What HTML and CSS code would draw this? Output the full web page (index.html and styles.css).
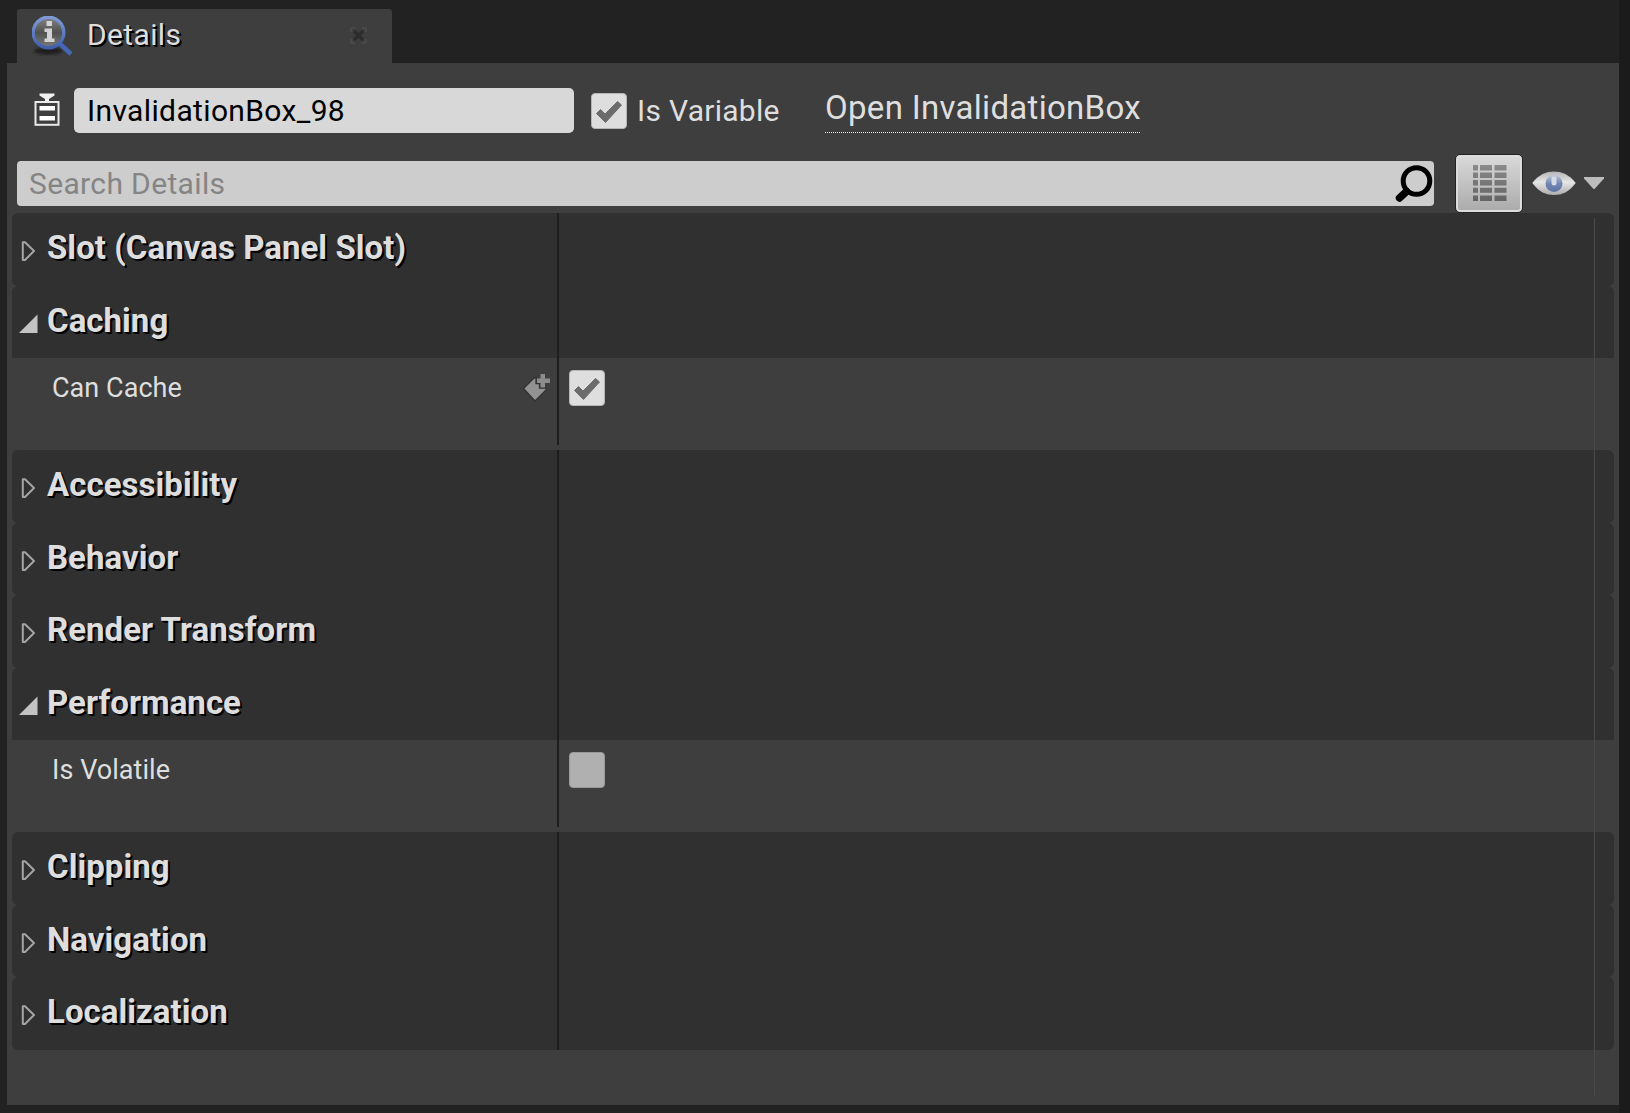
FILE: index.html
```
<!DOCTYPE html>
<html lang="en">
<head>
<meta charset="utf-8">
<title>Details</title>
<link rel="stylesheet" href="styles.css">
</head>
<body>
<svg width="0" height="0" class="defs">
  <defs>
    <linearGradient id="lens" x1="0" y1="0" x2="0" y2="1"><stop offset="0" stop-color="#858585"/><stop offset=".5" stop-color="#505050"/><stop offset="1" stop-color="#7a7a7a"/></linearGradient>
    <linearGradient id="rim" x1="0" y1="0" x2="0" y2="1"><stop offset="0" stop-color="#7f9ad6"/><stop offset="1" stop-color="#3f5fae"/></linearGradient>
    <linearGradient id="eyeball" x1="0" y1="0" x2="0" y2="1"><stop offset="0" stop-color="#b4b4b4"/><stop offset=".45" stop-color="#e6e6e6"/><stop offset="1" stop-color="#adadad"/></linearGradient>
    <linearGradient id="iris" x1="0" y1="0" x2="0" y2="1"><stop offset="0" stop-color="#bcc6da"/><stop offset=".5" stop-color="#7287b4"/><stop offset="1" stop-color="#5f74a3"/></linearGradient>
    <linearGradient id="cells" x1="0" y1="0" x2="0" y2="1"><stop offset="0" stop-color="#8b8b8b"/><stop offset="1" stop-color="#636363"/></linearGradient>
    <filter id="soft" x="-20%" y="-50%" width="140%" height="200%"><feGaussianBlur stdDeviation="1.5"/></filter>
    <symbol id="closed" viewBox="0 0 20 24"><path d="M4.800 3.200v17.800h2.200L16 12 7 3.200z" fill="none" stroke="#a4a4a4" stroke-width="2" stroke-linejoin="round"/></symbol>
    <symbol id="opened" viewBox="0 0 20 24"><path d="M19.500 2.500V21H1z" fill="#c3c3c3"/></symbol>
    <symbol id="tick" viewBox="0 0 36 36"><path d="M5.500 20.500l4-4 4.500 4.500L26.500 8.500l4 3.500L14.500 29.500z" fill="#6c6c6c" stroke="#6c6c6c" stroke-width="1" stroke-linejoin="round"/></symbol>
  </defs>
</svg>

<header class="tabs">
  <div class="tab">
    <svg class="tab-icon" viewBox="0 0 40 40">
      <ellipse cx="16" cy="35" rx="14" ry="3.500" fill="#1c1c1c" filter="url(#soft)"/>
      <path d="M27 27l12 11" stroke="#4566b5" stroke-width="4.500"/>
      <circle cx="16.500" cy="16.500" r="15.300" fill="url(#lens)" stroke="url(#rim)" stroke-width="3.400"/>
      <path d="M14.500 5h5.500v5h-5.500zM12.500 12.500h7.500v10h2.500v3.500H12.500v-3.500h2.500v-6.500h-2.500z" fill="#d2d2d2"/>
    </svg>
    <span class="tab-name">Details</span>
    <svg class="tab-close" viewBox="0 0 17 17">
      <path d="M1 5V1h4M12 1h4v4M16 12v4h-4M5 16H1v-4" fill="none" stroke="#555" stroke-width="1"/>
      <path d="M4 4l9 9M13 4l-9 9" stroke="#2c2c2c" stroke-width="3.200"/>
    </svg>
  </div>
</header>

<main class="panel">
  <div class="object">
    <svg class="widget-icon" viewBox="0 0 26 33">
      <path d="M5.500 .5h15v2l-5.500 3.500v2.500h-4V6L5.500 2.500z" fill="#f0f0f0"/>
      <rect x="1.500" y="9" width="23" height="22.800" fill="none" stroke="#eaeaea" stroke-width="2"/>
      <path d="M5.500 13h15.500v4.500H5.500zM5.500 23h15.500v4.500H5.500z" fill="#fff"/>
    </svg>
    <div class="name-box"><span class="name-text">InvalidationBox_98</span></div>
    <span class="check"><svg viewBox="0 0 36 36"><use href="#tick"/></svg></span>
    <span class="var-label">Is Variable</span>
    <a class="open-link"><span>Open InvalidationBox</span></a>
  </div>

  <div class="filter">
    <div class="search">
      <span class="search-text">Search Details</span>
      <svg class="search-icon" viewBox="0 0 40 40"><circle cx="23.500" cy="17" r="13.300" fill="none" stroke="#000" stroke-width="5"/><path d="M13.500 27.500L6.500 34" stroke="#000" stroke-width="7.500" stroke-linecap="round"/></svg>
    </div>
    <div class="matrix">
      <svg viewBox="0 0 34 37"><path d="M0 0h5v5.500H0zM7 0h12v5.500H7zM21.500 0h12v5.500h-12zM0 7.500h5V13H0zM7 7.500h12V13H7zM21.500 7.500h12V13h-12zM0 15h5v5.500H0zM7 15h12v5.500H7zM21.500 15h12v5.500h-12zM0 22.800h5v5H0zM7 22.800h12v5H7zM21.500 22.800h12v5h-12zM0 30.500h5V36H0zM7 30.500h12V36H7zM21.500 30.500h12V36h-12z" fill="url(#cells)"/></svg>
    </div>
    <svg class="eye" viewBox="0 0 44 26"><path d="M.3 13C7 4.500 14 1.500 22 1.500s15 3 21.700 11.500C37 22 30 25 22 25S7 22 .3 13z" fill="url(#eyeball)"/><circle cx="22" cy="13.500" r="8.500" fill="url(#iris)"/><path d="M19.500 6.500h5V13a2.500 2.500 0 0 1-5 0z" fill="#d5dbe6"/></svg>
    <svg class="arrow" viewBox="0 0 20 12"><path d="M0 0h20v1.500L10.500 12h-1L0 1.500z" fill="#bcbcbc"/></svg>
  </div>

  <div class="list">
    <section class="group tall"><div class="left"><svg class="twist"><use href="#closed"/></svg><span>Slot (Canvas Panel Slot)</span></div></section>
    <section class="group open"><div class="left"><svg class="twist"><use href="#opened"/></svg><span>Caching</span></div></section>
    <div class="prop">
      <div class="left"><span class="prop-name">Can Cache</span>
        <svg class="tag" viewBox="0 0 30 30"><path d="M1.500 14.500L10.500 5.500 14 3v6.500h3.500v4.500H24v2L13 27z" fill="#929292" stroke="#323232" stroke-width="1.300"/><path d="M18.500 0h4.500v4.500h5V9h-5v4.500h-4.500V9H15V4.500h3.500z" fill="#8c8c8c"/></svg>
      </div>
      <div class="value"><span class="check"><svg viewBox="0 0 36 36"><use href="#tick"/></svg></span></div>
    </div>
    <section class="group tall"><div class="left"><svg class="twist"><use href="#closed"/></svg><span>Accessibility</span></div></section>
    <section class="group"><div class="left"><svg class="twist"><use href="#closed"/></svg><span>Behavior</span></div></section>
    <section class="group tall"><div class="left"><svg class="twist"><use href="#closed"/></svg><span>Render Transform</span></div></section>
    <section class="group open"><div class="left"><svg class="twist"><use href="#opened"/></svg><span>Performance</span></div></section>
    <div class="prop">
      <div class="left"><span class="prop-name">Is Volatile</span></div>
      <div class="value"><span class="check off"></span></div>
    </div>
    <section class="group tall"><div class="left"><svg class="twist"><use href="#closed"/></svg><span>Clipping</span></div></section>
    <section class="group"><div class="left"><svg class="twist"><use href="#closed"/></svg><span>Navigation</span></div></section>
    <section class="group tall"><div class="left"><svg class="twist"><use href="#closed"/></svg><span>Localization</span></div></section>
    <div class="scroll-line"></div>
  </div>
</main>
</body>
</html>
```
FILE: styles.css
```
* { box-sizing: border-box; }
body {
  margin: 0;
  width: 1630px;
  height: 1113px;
  padding: 9px 11px 8px 7px;
  overflow: hidden;
  display: flex;
  flex-direction: column;
  background: linear-gradient(90deg, #222 0 1619px, #1b1b1b 1619px);
  color: #dedede;
  font: 30px/36px Roboto, sans-serif;
  letter-spacing: .36px;
  white-space: nowrap;
}
svg { display: block; flex: none; }
.defs { position: absolute; }

.tabs { height: 54px; padding-left: 10px; flex: none; }
.tab {
  width: 375px;
  height: 54px;
  display: flex;
  background: #3e3e3e;
  border-radius: 3px 3px 0 0;
}
.tab-icon { width: 40px; height: 40px; margin: 7px 0 0 15px; }
.tab-name { width: 263px; margin: 8px 0 0 15px; text-shadow: 1px 1px 0 #000, 2px 2px 0 #000; }
.tab-close { width: 17px; height: 17px; margin-top: 18px; }

.panel {
  height: 1042px;
  flex: none;
  background: #3e3e3e;
  padding: 25px 5px 0;
}
.object { height: 45px; display: flex; padding-left: 22px; }
.widget-icon { width: 26px; height: 33px; margin-top: 5px; }
.name-box {
  width: 500px;
  height: 45px;
  margin-left: 14px;
  padding: 5px 0 0 13px;
  border-radius: 5px;
  background: #d8d8d8;
  color: #000;
}
.check {
  display: block;
  flex: none;
  width: 36px;
  height: 36px;
  border-radius: 4px;
  background: #dedede;
  border: 1px solid #b5b5b5;
}
.check svg { margin: -1px; width: 36px; height: 36px; }
.check.off { background: #b0b0b0; border-color: #999; }
.object .check { margin: 5px 0 0 17px; }
.var-label { width: 188px; margin: 5px 0 0 10px; letter-spacing: .28px; }
.open-link {
  width: 315px;
  height: 45px;
  padding-top: 1px;
  font-size: 33px;
  line-height: 38px;
  letter-spacing: .3px;
  background: repeating-linear-gradient(90deg, #f0f0f0 0 1px, transparent 1px 2px) 0 44px / 100% 1px no-repeat;
}

.filter { height: 80px; display: flex; padding-left: 5px; }
.search {
  width: 1417px;
  height: 45px;
  margin-top: 28px;
  padding: 5px 0 0 12px;
  display: flex;
  justify-content: space-between;
  border-radius: 4px;
  background: #cdcdcd;
  color: #858585;
}
.search-icon { width: 40px; height: 40px; margin: -2px 1px 0 0; }
.matrix {
  width: 68px;
  height: 59px;
  margin: 21px 0 0 21px;
  padding: 13px 0 0 17px;
  border: 1px solid #222;
  border-radius: 5px;
  background: linear-gradient(#dadada, #aaa);
  box-shadow: inset 0 0 0 2px #dcdcdc;
}
.matrix svg { width: 34px; height: 37px; margin-top: -3px; }
.eye { width: 44px; height: 26px; margin: 37px 0 0 9px; }
.arrow { width: 20px; height: 12px; margin: 44px 0 0 8px; }

.list { position: relative; height: 892px; }
.group {
  height: 72px;
  border-radius: 6px;
  background: #303030;
  font-size: 33px;
  font-weight: 700;
  letter-spacing: .04px;
}
.group.tall { height: 73px; }
.group.open { border-radius: 6px 6px 0 0; }
.left {
  width: 547px;
  height: 100%;
  display: flex;
  border-right: 2px solid #1e1e1e;
}
.group .left { padding: 17px 0 0 6px; text-shadow: 1px 1px 0 #000, 2px 2px 0 #000; }
.group .left span { margin-left: 9px; }
.twist { width: 20px; height: 24px; margin-top: 9px; }
.prop { height: 92px; display: flex; font-size: 27px; letter-spacing: .05px; }
.prop .left { height: 87px; padding: 12px 0 0 40px; justify-content: space-between; }
.tag { width: 30px; height: 30px; margin: 4px 5px 0 0; }
.value { padding: 12px 0 0 10px; }
.scroll-line {
  position: absolute;
  left: 1582px;
  top: 5px;
  width: 1px;
  height: 877px;
  background: #4b4b4b;
}
```
